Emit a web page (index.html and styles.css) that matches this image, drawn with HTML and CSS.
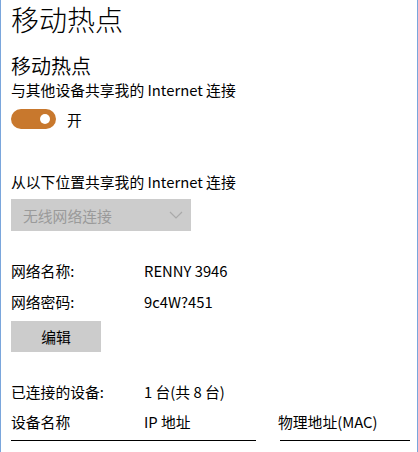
FILE: index.html
```html
<!DOCTYPE html>
<html lang="zh-CN">
<head>
<meta charset="utf-8">
<title>移动热点</title>
<link rel="stylesheet" href="styles.css">
</head>
<body>
<div class="page">
  <h1 class="title">移动热点</h1>
  <h2 class="subtitle">移动热点</h2>
  <p class="desc">与其他设备共享我的 Internet 连接</p>
  <div class="toggle-row">
    <span class="toggle"><span class="knob"></span></span>
    <span class="toggle-label">开</span>
  </div>
  <p class="share-from">从以下位置共享我的 Internet 连接</p>
  <div class="select">
    <span class="select-text">无线网络连接</span>
    <svg class="chev" width="14" height="8" viewBox="0 0 14 8"><path d="M1 1 L7 7 L13 1" fill="none" stroke="#a9a9a9" stroke-width="1.2"/></svg>
  </div>
  <div class="info">
    <div class="row"><span class="label">网络名称:</span><span class="value">RENNY 3946</span></div>
    <div class="row"><span class="label">网络密码:</span><span class="value">9c4W?451</span></div>
  </div>
  <button class="btn">编辑</button>
  <div class="row connected"><span class="label">已连接的设备:</span><span class="value">1 台(共 8 台)</span></div>
  <div class="table-head">
    <span class="col c1">设备名称</span>
    <span class="col c2">IP 地址</span>
    <span class="col c3">物理地址(MAC)</span>
  </div>
  <div class="rules">
    <span class="rule r1"></span>
    <span class="rule r2"></span>
  </div>
</div>
</body>
</html>
```

FILE: styles.css
```css
html, body {
  margin: 0;
  padding: 0;
  background: #fff;
}
body {
  font-family: "Noto Sans CJK SC", sans-serif;
  color: #000;
  width: 418px;
  height: 452px;
  overflow: hidden;
}
.page {
  box-sizing: border-box;
  width: 418px;
  height: 452px;
  border-left: 1px solid #7aa6dc;
  border-right: 1px solid #7aa6dc;
  padding-left: 10px;
}
.title {
  margin: 0;
  font-size: 28px;
  font-weight: 300;
  line-height: 38px;
  height: 38px;
}
.subtitle {
  margin: 14px 0 0;
  font-size: 20px;
  font-weight: 350;
  line-height: 28px;
  height: 28px;
}
.desc {
  margin: 0;
  font-size: 14.8px;
  line-height: 20px;
  height: 20px;
}
.toggle-row {
  margin-top: 9px;
  display: flex;
  align-items: center;
  height: 20px;
}
.toggle {
  box-sizing: border-box;
  width: 45px;
  height: 20px;
  border-radius: 10px;
  background: #c8782d;
  display: flex;
  align-items: center;
  justify-content: flex-end;
  padding-right: 6px;
}
.knob {
  width: 10px;
  height: 10px;
  border-radius: 50%;
  background: #fff;
}
.toggle-label {
  margin-left: 11px;
  font-size: 14.8px;
}
.share-from {
  margin: 43px 0 0;
  font-size: 14.8px;
  line-height: 20px;
  height: 20px;
}
.select {
  margin-top: 7px;
  width: 180px;
  height: 32px;
  background: #cccccc;
  display: flex;
  align-items: center;
  justify-content: space-between;
  box-sizing: border-box;
  padding: 0 8px 0 12px;
}
.select-text {
  color: #9a9a9a;
  font-size: 14.8px;
}
.chev {
  display: block;
}
.info {
  margin-top: 24px;
}
.row {
  display: flex;
  height: 31px;
  line-height: 31px;
  font-size: 14.8px;
}
.label {
  width: 133px;
  flex: none;
}
.btn {
  display: block;
  margin-top: 4px;
  width: 90px;
  height: 31px;
  border: none;
  background: #cccccc;
  font-family: inherit;
  font-size: 14.8px;
  color: #000;
  padding: 0;
}
.connected {
  margin-top: 25px;
  height: 30px;
  line-height: 30px;
}
.table-head {
  display: flex;
  height: 30px;
  line-height: 30px;
  font-size: 14.8px;
}
.col.c1 { width: 133px; }
.col.c2 { width: 134px; }
.rules {
  display: flex;
  margin-top: 3px;
}
.rule {
  display: block;
  height: 1px;
  background: #000;
}
.r1 { width: 245px; }
.r2 { width: 130px; margin-left: 24px; }
```
